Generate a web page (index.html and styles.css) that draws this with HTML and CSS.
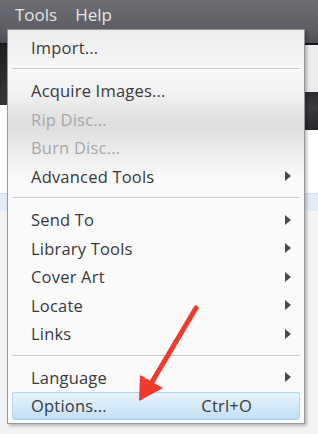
FILE: index.html
```html
<!DOCTYPE html>
<html lang="en">

<head>
    <meta charset="UTF-8">
    <meta name="viewport" content="width=device-width, initial-scale=1.0">
    <title>Tools menu</title>
    <link rel="stylesheet" href="styles.css">
</head>

<body>
    <div class="app">
        <div class="topbar">
            <span class="topitem">Tools</span>
            <span class="topitem">Help</span>
        </div>
        <div class="blackline"></div>
        <div class="content">
            <div class="side">
                <div class="sidedark"></div>
            </div>
            <div class="pane">
                <div class="panelight"></div>
                <div class="panedark"></div>
                <div class="panewhite"></div>
            </div>
        </div>
        <div class="band"></div>
    </div>

    <!-- popup menu -->
    <div class="menu">
        <div class="item">Import...</div>
        <div class="sep"></div>
        <div class="item">Acquire Images...</div>
        <div class="item off">Rip Disc...</div>
        <div class="item off">Burn Disc...</div>
        <div class="item sub">Advanced Tools</div>
        <div class="sep"></div>
        <div class="item sub">Send To</div>
        <div class="item sub">Library Tools</div>
        <div class="item sub">Cover Art</div>
        <div class="item sub">Locate</div>
        <div class="item sub">Links</div>
        <div class="sep"></div>
        <div class="item sub">Language</div>
        <div class="item hot">Options...<span class="key">Ctrl+O</span></div>
    </div>

    <svg class="pointer" width="318" height="434" viewBox="0 0 318 434">
        <line x1="196" y1="308" x2="152" y2="382" stroke="#ef3a2c" stroke-width="5" stroke-linecap="round" />
        <polygon points="139,401 140,375 163,388" fill="#ef3a2c" />
    </svg>
</body>

</html>
```

FILE: styles.css
```css
* {
    margin: 0;
    padding: 0;
    box-sizing: border-box;
}

body {
    background-color: #f3f3f3;
    font-family: "Open Sans", "Noto Sans", sans-serif;
    width: 318px;
    height: 434px;
    overflow: hidden;
    position: relative;
}

.app {
    display: flex;
    flex-direction: column;
    height: 100%;
}

.topbar {
    display: flex;
    gap: 18px;
    height: 43px;
    padding: 0 0 0 15px;
    background: linear-gradient(#6d6f75, #5b5d63 70%, #4c4e53);
}

.topitem {
    color: #e4e4e6;
    font-size: 17px;
    line-height: 30px;
}

.blackline {
    height: 2px;
    background-color: #16171a;
}

.content {
    display: flex;
    height: 148px;
}

.side {
    width: 150px;
    background-color: #ffffff;
}

.sidedark {
    height: 60px;
    background: linear-gradient(135deg, #1e1f22, #3c3d41 40%, #1d1e21);
}

.pane {
    display: flex;
    flex-direction: column;
    flex: 1;
}

.panelight {
    height: 47px;
    background-color: #ececee;
}

.panedark {
    height: 38px;
    background: linear-gradient(#2a2c31, #383a40 40%, #24262a);
}

.panewhite {
    flex: 1;
    background-color: #ffffff;
}

.band {
    height: 18px;
    background-color: #e2ecf7;
    border-top: 1px solid #cfdff0;
}

.menu {
    position: absolute;
    left: 7px;
    top: 29px;
    width: 298px;
    padding: 3px 4px 3px 4px;
    border: 1px solid #979797;
    background: linear-gradient(#ececec, #f7f7f7 10%, #f2f2f2 16%, #dedede 24%, #e6e6e6 28%, #fafafa 38%, #fbfbfb 100%);
    box-shadow: 2px 2px 3px rgba(0, 0, 0, 0.25);
}

.item {
    display: flex;
    align-items: center;
    height: 28.5px;
    padding-left: 19px;
    font-size: 16.5px;
    letter-spacing: 0.2px;
    color: #38383c;
    position: relative;
}

.off {
    color: #a6a6a8;
}

.sub::after {
    content: "";
    position: absolute;
    right: 9px;
    top: 9px;
    border-left: 6px solid #484a52;
    border-top: 5.5px solid transparent;
    border-bottom: 5.5px solid transparent;
}

.sep {
    height: 15px;
    display: flex;
    flex-direction: column;
    justify-content: center;
}

.sep::before {
    content: "";
    height: 1px;
    background-color: #c9c9c9;
    border-bottom: 1px solid #ffffff;
    box-sizing: content-box;
}

.hot {
    border: 1px solid #a9d0ee;
    border-radius: 3px;
    background: linear-gradient(#e9f3fc, #d7eaf8 50%, #c2e0f4);
    padding-left: 18px;
}

.key {
    margin-left: auto;
    margin-right: 47px;
}

.pointer {
    position: absolute;
    left: 0;
    top: 0;
}
```
